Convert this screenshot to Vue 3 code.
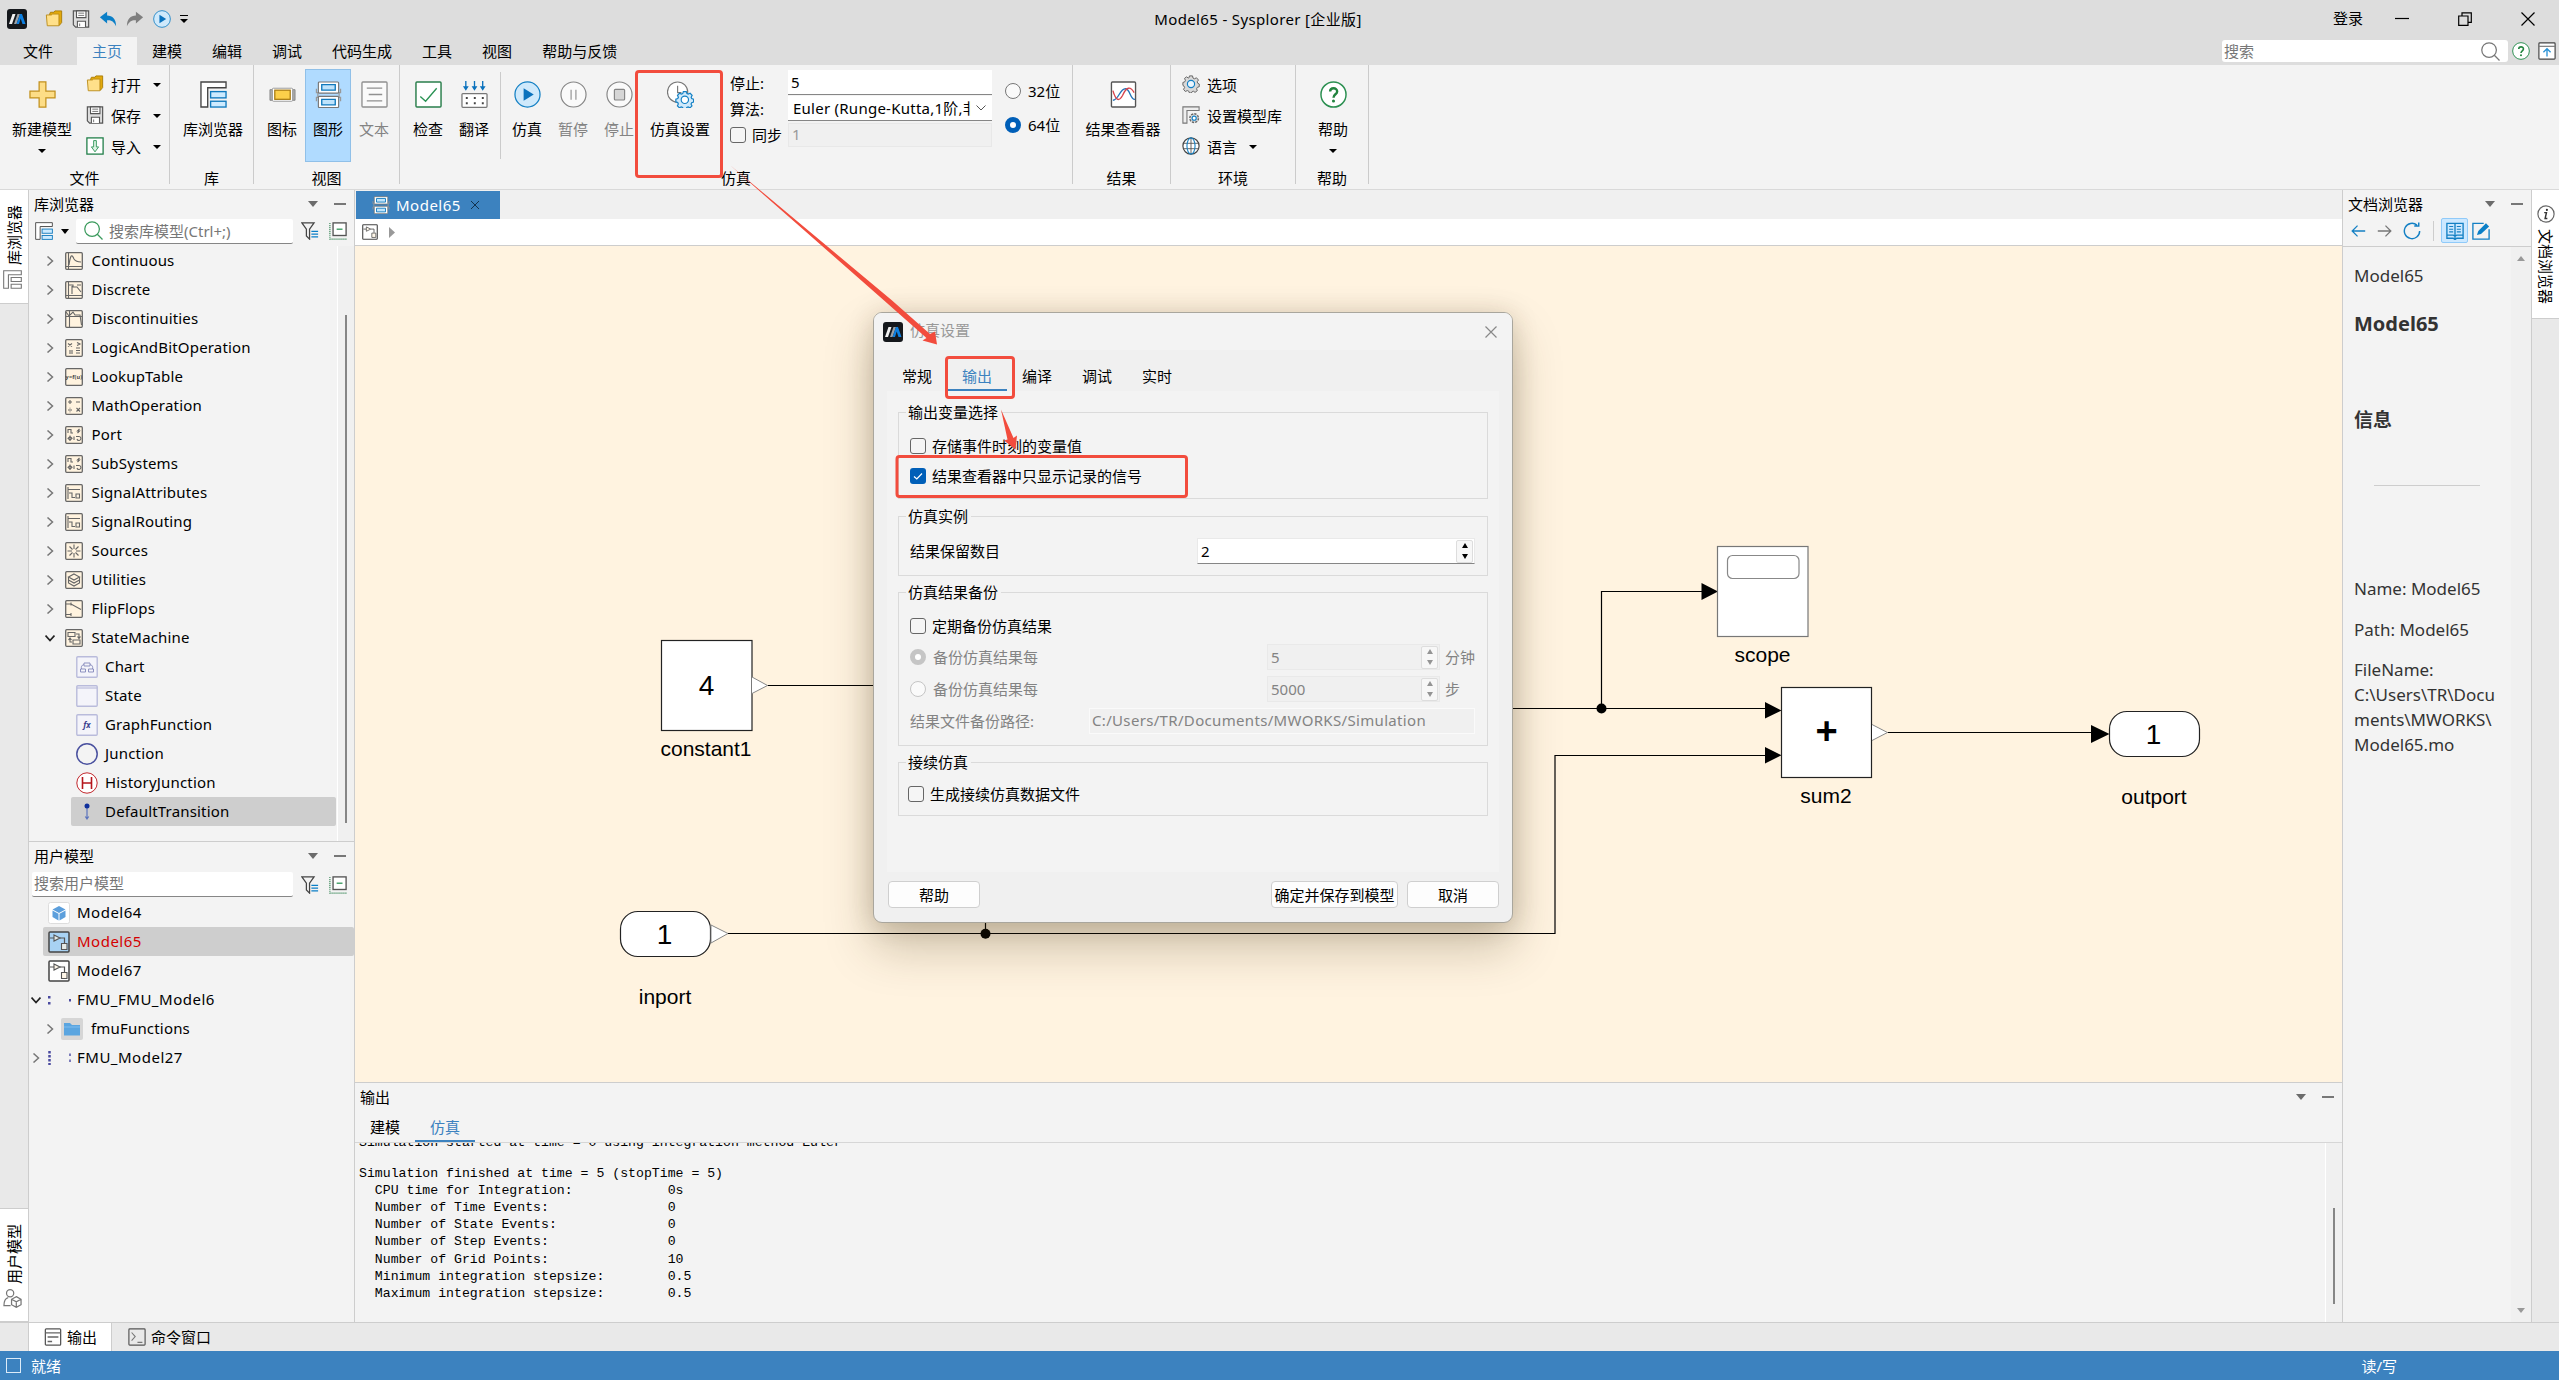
<template>
  <div class="window">
    <!-- Icon sprites -->
    <svg class="sprites" width="0" height="0">
      <symbol id="logo" viewBox="0 0 20 20">
        <rect width="20" height="20" rx="3" fill="#15181c"/>
        <path d="M2 15 L5.5 5 H8.5 L5 15 Z" fill="#f2f2f2"/>
        <path d="M7 15 L10.5 5 H13 L9.5 15 Z" fill="#9aa0a6"/>
        <path d="M9.5 15 L13 5 H15 L18.5 15 H15.5 L13.7 9.5 L12 15 Z" fill="#0d7fe0"/>
      </symbol>
      <symbol id="folder" viewBox="0 0 20 20">
        <path d="M5 5 L6 2.5 H10 L11 1 H18.5 V14 L16 17 Z" fill="#e2a90c" stroke="#a87a05"/>
        <path d="M1.5 5.5 H7 L8.5 4.5 H15.5 V17.5 H2.5 Z" fill="#ffe08a" stroke="#b98a16"/>
      </symbol>
      <symbol id="save" viewBox="0 0 20 20">
        <path d="M1.5 1 H18.5 V19 H4 L1.5 16.5 Z" fill="#ddd" stroke="#555" stroke-width="1.3"/>
        <path d="M5 1 H15.5 V8.5 H5 Z M6 19 V12.5 H15 V19" fill="#fff" stroke="#555" stroke-width="1.2"/>
        <path d="M7 3.5 H13.5 M7 6 H13.5 M8.5 15 V18" stroke="#666"/>
      </symbol>
      <symbol id="undo" viewBox="0 0 20 20">
        <path d="M1 8 L9 2 V6 C15 6 19 10 19 18 C16.5 12.5 13.5 11 9 11.3 V15 Z" fill="#0b7fc7"/>
      </symbol>
      <symbol id="redo" viewBox="0 0 20 20">
        <path d="M19 8 L11 2 V6 C5 6 1 10 1 18 C3.5 12.5 6.5 11 11 11.3 V15 Z" fill="#7f7f7f"/>
      </symbol>
      <symbol id="play" viewBox="0 0 28 28">
        <circle cx="14" cy="14" r="13" fill="#cfe9fb" stroke="#1480c4" stroke-width="1.3"/>
        <path d="M10 7.5 L20.5 14 L10 20.5 Z" fill="#0a72bd"/>
      </symbol>
      <symbol id="pause" viewBox="0 0 28 28">
        <circle cx="14" cy="14" r="13" fill="#fafafa" stroke="#858585" stroke-width="1.2"/>
        <path d="M11.5 9 V19.5 M16.5 9 V19.5" stroke="#999" stroke-width="1.3"/>
      </symbol>
      <symbol id="stop" viewBox="0 0 28 28">
        <circle cx="14" cy="14" r="13" fill="#fafafa" stroke="#858585" stroke-width="1.2"/>
        <rect x="8.7" y="8.7" width="10.6" height="11" rx="1" fill="#d6d6d6" stroke="#858585" stroke-width="1.2"/>
      </symbol>
      <symbol id="plus" viewBox="0 0 28 28">
        <path d="M10.5 1 H17.5 V10.5 H27 V17.5 H17.5 V27 H10.5 V17.5 H1 V10.5 H10.5 Z" fill="#fddd86" stroke="#c2901c" stroke-width="1.3"/>
      </symbol>
      <symbol id="import" viewBox="0 0 20 20">
        <rect x="1" y="1" width="18" height="18" fill="#fff" stroke="#1c7c45" stroke-width="1.4"/>
        <path d="M8.5 4 H11.5 V11 H14 L10 16.5 L6 11 H8.5 Z" fill="#dff5e6" stroke="#2a9354"/>
      </symbol>
      <symbol id="lib" viewBox="0 0 28 28">
        <path d="M1 1 H27 V7 H8 V27 H1 Z" fill="#fff" stroke="#444" stroke-width="1.4"/>
        <rect x="11" y="11" width="16" height="6.5" fill="#cdebff" stroke="#1079bd" stroke-width="1.4"/>
        <rect x="11" y="21" width="16" height="6" fill="#cdebff" stroke="#1079bd" stroke-width="1.4"/>
      </symbol>
      <symbol id="lib-gray" viewBox="0 0 28 28">
        <path d="M1 1 H27 V7 H8 V27 H1 Z M12 11 H27 V17 H12 Z M12 21 H27 V27 H12 Z" fill="#fff" stroke="#777" stroke-width="1.6"/>
      </symbol>
      <symbol id="badge" viewBox="0 0 28 28">
        <path d="M1 9 H4 V20 H1 Z M24 9 H27 V20 H24 Z" fill="#aaa" stroke="#888"/>
        <rect x="3.5" y="7.5" width="21" height="13.5" rx="1" fill="#fff" stroke="#999"/>
        <rect x="6" y="9.5" width="16" height="9.5" fill="#fccf4a" stroke="#a87a10" stroke-width="1.3"/>
      </symbol>
      <symbol id="graph" viewBox="0 0 28 28">
        <path d="M3 12 V17 M25 12 V17 M1.5 8 V12 H4 M26.5 8 V12 H24 M1.5 21 V17 H4 M26.5 21 V17 H24" fill="none" stroke="#999" stroke-width="1.3"/>
        <rect x="3.5" y="1" width="21" height="11.5" rx="1" fill="#fff" stroke="#777" stroke-width="1.2"/>
        <rect x="3.5" y="16" width="21" height="11.5" rx="1" fill="#fff" stroke="#777" stroke-width="1.2"/>
        <path d="M7 3.8 H21 V9.5 H7 Z M7 19 H21 V24.7 H7 Z" fill="#bfe3fb" stroke="#1079bd" stroke-width="1.4"/>
      </symbol>
      <symbol id="text" viewBox="0 0 28 28">
        <rect x="1" y="1" width="26" height="26" rx="1" fill="#fafafa" stroke="#909090" stroke-width="1.4"/>
        <path d="M6 7.5 H22 M8 14 H22 M6 20.5 H22" stroke="#909090" stroke-width="1.3"/>
      </symbol>
      <symbol id="check" viewBox="0 0 28 28">
        <rect x="1" y="1" width="26" height="26" rx="1" fill="#fff" stroke="#2a7f4c" stroke-width="1.5"/>
        <path d="M5.5 16 L11 21 L22.5 7.5" fill="none" stroke="#2a9354" stroke-width="1.4"/>
      </symbol>
      <symbol id="translate" viewBox="0 0 28 28">
        <path d="M5 0 V8 M14 0 V8 M22.5 0 V8" stroke="#0b72bd" stroke-width="1.4"/>
        <path d="M2 5.5 H8 L5 10 Z M11 5.5 H17 L14 10 Z M19.5 5.5 H25.5 L22.5 10 Z" fill="#0b72bd"/>
        <rect x="1" y="13" width="26" height="14.3" rx="1" fill="#fff" stroke="#777" stroke-width="1.3"/>
        <path d="M5 17.7 H24 M5 23 H24" stroke="#444" stroke-width="2" stroke-dasharray="2 6.3"/>
      </symbol>
      <symbol id="gear" viewBox="0 0 20 20">
        <path d="M8.3 1 h3.4 l.5 2.4 1.7.8 2.2-1.1 2.2 2.5-1.4 1.9.5 1.6 1.8.9v3l-2.2.7-.8 1.6.8 2.1-2.5 1.9-1.9-1.3-1.3.4-.9 1.6H8.3l-.8-2-1.6-.7-2.2 1-2-2.4 1.2-2-.7-1.6L1 11.5 V8.3l2.1-.7.7-1.7-1-2.1L5 2.1l2 1.2.9-.4Z" fill="#d9d9d9" stroke="#666" stroke-width="1.1"/>
        <circle cx="10" cy="10" r="4" fill="#eaf6ff" stroke="#1480c4" stroke-width="1.3"/>
      </symbol>
      <symbol id="sim-set" viewBox="0 0 28 28">
        <circle cx="11" cy="11.5" r="10.5" fill="#fff" stroke="#777" stroke-width="1.2"/>
        <path d="M11 5 V12 H15" fill="none" stroke="#777" stroke-width="1.2"/>
        <path d="M16.8 10.5 h3.2 l.7 2.2 1.4.6 2.1-1 2.2 2.3-1.1 2 .6 1.5 2.1.8v3l-2.1.7-.7 1.5 1 2-2.2 2.2-2-1-1.5.6-.7 2.100h-3.100l-.7-2.100-1.500-.7-2 1-2.200-2.200 1-2-.6-1.500-2.100-.7v-3l2.100-.7.7-1.500-1-2 2.200-2.300 2 1 1.500-.6Z" transform="translate(1 1) scale(.95)" fill="#cfe9fb" stroke="#1480c4" stroke-width="1.3"/>
        <circle cx="18.500" cy="19.500" r="3.800" fill="#fff" stroke="#1480c4" stroke-width="1.200"/>
      </symbol>
      <symbol id="result" viewBox="0 0 28 28">
        <rect x="1.500" y="1" width="25" height="26" rx="1" fill="#fff" stroke="#555" stroke-width="1.400"/>
        <path d="M3 20 C9 20 10 8 16 8 C21 8 21 20 26 19" fill="none" stroke="#2374b8" stroke-width="1.400"/>
        <path d="M3 10 C6 20 9 22 13 15 C17 6 21 5 25 12" fill="none" stroke="#d8434b" stroke-width="1.400"/>
      </symbol>
      <symbol id="lib-set" viewBox="0 0 20 20">
        <path d="M1 1 H19 V5 H5.500 V19 H1 Z" fill="#eee" stroke="#777" stroke-width="1.200"/>
        <circle cx="13.500" cy="13.500" r="4.800" fill="#ddd" stroke="#666" stroke-width="1.600" stroke-dasharray="2.500 1.200"/>
        <circle cx="13.500" cy="13.500" r="2.300" fill="#fff" stroke="#1480c4" stroke-width="1.300"/>
      </symbol>
      <symbol id="globe" viewBox="0 0 20 20">
        <circle cx="10" cy="10" r="9" fill="#fff" stroke="#444" stroke-width="1.300"/>
        <path d="M10 1 V19 M1.500 7 H18.500 M1.500 13 H18.500" stroke="#555"/>
        <ellipse cx="10" cy="10" rx="4.500" ry="9" fill="none" stroke="#1480c4" stroke-width="1.200"/>
      </symbol>
      <symbol id="help" viewBox="0 0 28 28">
        <circle cx="14" cy="14" r="13" fill="#fff" stroke="#2a8f50" stroke-width="1.500"/>
        <path d="M10.500 11 C10.500 6.500 17.800 6.500 17.800 10.800 C17.800 13.800 14 13.800 14 17.300" fill="none" stroke="#23843f" stroke-width="2.500"/>
        <circle cx="14" cy="20.700" r="1.600" fill="#23843f"/>
      </symbol>
      <symbol id="fold-up" viewBox="0 0 20 20">
        <rect x="1" y="1" width="18" height="18" rx="1" fill="#fff" stroke="#444" stroke-width="1.300"/>
        <path d="M1 4.800 H19" stroke="#777" stroke-width="1.300"/>
        <path d="M10 16 V8 M6 11.500 L10 7.500 L14 11.500" fill="none" stroke="#2b93d6" stroke-width="1.500"/>
      </symbol>
      <symbol id="search" viewBox="0 0 20 20">
        <circle cx="8.500" cy="8.500" r="7.700" fill="none" stroke="currentColor" stroke-width="1.300"/>
        <path d="M14 14 L19.500 19.500" stroke="currentColor" stroke-width="1.300"/>
      </symbol>
      <symbol id="filter" viewBox="0 0 20 20">
        <path d="M1 1 H14.500 L9.500 8 V19 L6 15.500 V8 Z" fill="none" stroke="#444" stroke-width="1.400"/>
        <path d="M11.500 10.500 H19 M11.500 13.500 H19 M11.500 16.500 H19" stroke="#0b7fc7" stroke-width="1.300"/>
      </symbol>
      <symbol id="collapse" viewBox="0 0 20 20">
        <rect x="4.500" y="1" width="14.500" height="14" fill="#fff" stroke="#555" stroke-width="1.500"/>
        <path d="M8.500 8 H15" stroke="#2a9354" stroke-width="1.400"/>
        <path d="M1 1 V19 H20" fill="none" stroke="#2a7f4c" stroke-width="1.200" stroke-dasharray="1.200 1"/>
      </symbol>
      <symbol id="user" viewBox="0 0 20 20">
        <circle cx="7.500" cy="4.500" r="3.800" fill="none" stroke="#777" stroke-width="1.300"/>
        <path d="M8 17.500 H1 C1 11 3 9.500 5.500 9 M14 8 L19 10.800 V16.500 L14 19.300 L9 16.500 V10.800 Z M9 10.800 L14 13.500 L19 10.800 M14 13.500 V19" fill="none" stroke="#777" stroke-width="1.300"/>
      </symbol>
      <symbol id="diagram" viewBox="0 0 22 22">
        <rect x="1" y="1" width="20" height="20" rx="1" fill="currentColor" stroke="#444" stroke-width="1.500"/>
        <path d="M2 7 H6 M12 7 H16.500 V12" fill="none" stroke="#555" stroke-width="1.200"/>
        <path d="M6 4 L12 7 L6 10 Z M13.500 12.500 H19 V18.500 H13.500 Z" fill="#fff3df" fill-opacity=".7" stroke="#555" stroke-width="1.100"/>
      </symbol>
      <symbol id="output" viewBox="0 0 20 20">
        <rect x="1.500" y="1" width="17" height="18" rx="1" fill="#fff" stroke="#555" stroke-width="1.400"/>
        <path d="M1.500 5.500 H18.500 M4 10 H16 M4 15 H9" stroke="#666" stroke-width="1.400"/>
      </symbol>
      <symbol id="cmd" viewBox="0 0 20 20">
        <rect x="1" y="1" width="18" height="18" rx="1" fill="none" stroke="#555" stroke-width="1.300"/>
        <path d="M4 5 L8 9.500 L4 14 M10.500 16 H16" fill="none" stroke="#777" stroke-width="1.200"/>
      </symbol>
      <symbol id="back" viewBox="0 0 20 20">
        <path d="M18 10 H3.500 M9.500 4 L3.500 10 L9.500 16" fill="none" stroke="currentColor" stroke-width="1.400"/>
      </symbol>
      <symbol id="refresh" viewBox="0 0 20 20">
        <path d="M18.500 10 A8.500 8.500 0 1 1 15.500 3.500 M17.500 .5 V4.500 H12.500" fill="none" stroke="#1480c4" stroke-width="1.600"/>
      </symbol>
      <symbol id="book" viewBox="0 0 20 20">
        <path d="M1 1.500 H19 V18 H12 L10 19.500 L8 18 H1 Z M10 2 V19 M1 14.500 H8 L10 16 L12 14.500 H19" fill="none" stroke="#1480c4" stroke-width="1.500"/>
        <path d="M3.500 5 H8 M3.500 8 H8 M3.500 11 H8 M12 5 H16.500 M12 8 H16.500 M12 11 H16.500" stroke="#1480c4" stroke-width="1.200"/>
      </symbol>
      <symbol id="edit" viewBox="0 0 20 20">
        <path d="M13 1.500 H1 V19 H19 V8" fill="none" stroke="#1480c4" stroke-width="1.500"/>
        <path d="M5.500 14.500 L7 10 L15.500 1.500 L19 5 L10 13.200 Z" fill="#0b7fc7"/>
      </symbol>
      <symbol id="info" viewBox="0 0 20 20">
        <circle cx="10" cy="10" r="9" fill="#fff" stroke="#666" stroke-width="1.300"/>
        <path d="M8 8.500 H10.500 L9 15 H11.500" fill="none" stroke="#333" stroke-width="1.600"/>
        <circle cx="11" cy="5.500" r="1.200" fill="#333"/>
      </symbol>
    </svg>

    <!-- Title bar -->
    <header class="titlebar">
      <div class="quick">
        <svg class="ic20"><use href="#logo"/></svg>
        <svg v-for="q in quick" :key="q" class="ic18"><use :href="'#' + q"/></svg>
        <span class="quick-more"><i></i><b class="tri"></b></span>
      </div>
      <div class="title">Model65 - Sysplorer [企业版]</div>
      <div class="win-btns">
        <span class="login">登录</span>
        <svg class="wb" viewBox="0 0 14 14"><path d="M0 6.500 H14"/></svg>
        <svg class="wb" viewBox="0 0 14 14"><path d="M.7 4 H10 V13.300 H.7 Z M4 4 V.8 H13.300 V10.300 H10"/></svg>
        <svg class="wb" viewBox="0 0 14 14"><path d="M.5 .5 L13.500 13.500 M13.500 .5 L.5 13.500"/></svg>
      </div>
    </header>

    <nav class="menubar">
      <span v-for="m in menus" :key="m" :class="['menu', { active: m === activeMenu, first: m === '文件' }]" @click="activeMenu = m">{{ m }}</span>
      <div class="top-search"><span>搜索</span><svg class="ic19"><use href="#search"/></svg></div>
      <svg class="ic18 mr8"><use href="#help"/></svg>
      <svg class="ic18 mr3"><use href="#fold-up"/></svg>
    </nav>

    <!-- Ribbon -->
    <section class="ribbon">
      <div class="group g-file">
        <div class="tools">
          <div class="big w60">
            <svg class="ic27"><use href="#plus"/></svg>
            <span>新建模型</span>
            <b class="tri"></b>
          </div>
          <div class="small-col">
            <div v-for="s in fileTools" :key="s.label" class="small">
              <svg class="ic18"><use :href="'#' + s.icon"/></svg>
              <span>{{ s.label }}</span>
              <b class="tri"></b>
            </div>
          </div>
        </div>
        <div class="group-name">文件</div>
      </div>
      <div class="group g-lib">
        <div class="tools">
          <div class="big w60"><svg class="ic27"><use href="#lib"/></svg><span>库浏览器</span></div>
        </div>
        <div class="group-name">库</div>
      </div>
      <div class="group g-view">
        <div class="tools">
          <div class="big"><svg class="ic27"><use href="#badge"/></svg><span>图标</span></div>
          <div class="big on"><svg class="ic27"><use href="#graph"/></svg><span>图形</span></div>
          <div class="big off"><svg class="ic27"><use href="#text"/></svg><span>文本</span></div>
        </div>
        <div class="group-name">视图</div>
      </div>
      <div class="group g-sim">
        <div class="tools">
          <div class="big"><svg class="ic27"><use href="#check"/></svg><span>检查</span></div>
          <div class="big"><svg class="ic27"><use href="#translate"/></svg><span>翻译</span></div>
          <i class="vsep"></i>
          <div class="big"><svg class="ic27"><use href="#play"/></svg><span>仿真</span></div>
          <div class="big off"><svg class="ic27"><use href="#pause"/></svg><span>暂停</span></div>
          <div class="big off"><svg class="ic27"><use href="#stop"/></svg><span>停止</span></div>
          <div class="big w76"><svg class="ic27"><use href="#sim-set"/></svg><span>仿真设置</span></div>
          <div class="sim-form">
            <label>停止:</label><div class="field">5</div>
            <label>算法:</label>
            <div class="field combo"><span>Euler (Runge-Kutta,1阶,非刚性)</span><svg viewBox="0 0 10 6"><path d="M.5 .5 L5 5 L9.500 .5"/></svg></div>
            <label class="sync"><i class="box"></i>同步</label><div class="field disabled">1</div>
          </div>
          <div class="bits">
            <label><i class="radio"></i>32位</label>
            <label><i class="radio on"></i>64位</label>
          </div>
        </div>
        <div class="group-name">仿真</div>
      </div>
      <div class="group g-result">
        <div class="tools">
          <div class="big w76"><svg class="ic27"><use href="#result"/></svg><span>结果查看器</span></div>
        </div>
        <div class="group-name">结果</div>
      </div>
      <div class="group g-env">
        <div class="tools">
          <div class="small-col">
            <div class="small"><svg class="ic18"><use href="#gear"/></svg><span>选项</span></div>
            <div class="small"><svg class="ic18"><use href="#lib-set"/></svg><span>设置模型库</span></div>
            <div class="small"><svg class="ic18"><use href="#globe"/></svg><span>语言</span><b class="tri"></b></div>
          </div>
        </div>
        <div class="group-name">环境</div>
      </div>
      <div class="group g-help">
        <div class="tools">
          <div class="big"><svg class="ic27"><use href="#help"/></svg><span>帮助</span><b class="tri"></b></div>
        </div>
        <div class="group-name">帮助</div>
      </div>
    </section>

    <!-- Work area -->
    <main class="work">
      <aside class="strip left">
        <div class="vtab up"><span>库浏览器</span><svg class="ic19"><use href="#lib-gray"/></svg></div>
        <div class="vtab down"><span>用户模型</span><svg class="ic19"><use href="#user"/></svg></div>
      </aside>

      <section class="side">
        <div class="panel lib-panel">
          <div class="panel-head"><span>库浏览器</span><b class="tri big-tri"></b><i class="dash"></i></div>
          <div class="panel-tools">
            <svg class="ic18"><use href="#lib"/></svg>
            <b class="tri black"></b>
            <div class="search-box"><svg class="ic19 green"><use href="#search"/></svg>搜索库模型(Ctrl+;)</div>
            <svg class="ic18 flt"><use href="#filter"/></svg>
            <svg class="ic18"><use href="#collapse"/></svg>
          </div>
          <div class="tree-wrap">
            <div class="tree">
              <div v-for="n in library" :key="n.name" class="row">
                <svg :class="['chev', { open: n.open }]" viewBox="0 0 10 10"><path d="M2.500 .5 L7.500 5 L2.500 9.500"/></svg>
                <svg class="ic18 node-icon" viewBox="0 0 18 18">
                  <rect x=".7" y=".7" width="16.600" height="16.600" rx="1" fill="#fff3df" stroke="#666" stroke-width="1.300"/>
                  <text v-if="n.glyph" x="9" y="11" text-anchor="middle" font-size="5.500" font-weight="bold" font-family="Noto Sans" fill="#444">{{ n.glyph }}</text>
                  <path :d="n.path" fill="none" stroke="#666" stroke-width="1.100"/>
                </svg>
                <span>{{ n.name }}</span>
              </div>
              <div v-for="c in states" :key="c.name" :class="['row', 'child', { selected: c.name === 'DefaultTransition' }]">
                <svg class="ic22" viewBox="0 0 22 22">
                  <rect v-if="c.box" x=".8" y=".8" width="20.400" height="20.400" rx="1" fill="#f4f4fa" stroke="#b9bbdb" stroke-width="1.400"/>
                  <circle v-if="c.ring" cx="11" cy="11" r="10.200" :fill="c.fill" :stroke="c.ring" :stroke-width="c.sw"/>
                  <text v-if="c.glyph" x="11" y="13.500" text-anchor="middle" font-size="8" font-style="italic" font-weight="bold" font-family="Noto Sans" fill="#3b3f8f">{{ c.glyph }}</text>
                  <path v-if="c.path" :d="c.path" fill="none" :stroke="c.stroke" :stroke-width="c.pw"/>
                  <circle v-if="c.dot" cx="11" cy="5" r="2.500" fill="#10309c"/>
                </svg>
                <span>{{ c.name }}</span>
              </div>
            </div>
            <div class="track"><i class="thumb"></i></div>
          </div>
        </div>
        <div class="panel user-panel">
          <div class="panel-head"><span>用户模型</span><b class="tri big-tri"></b><i class="dash"></i></div>
          <div class="panel-tools user-tools">
            <div class="search-box wide">搜索用户模型</div>
            <svg class="ic18 flt"><use href="#filter"/></svg>
            <svg class="ic18"><use href="#collapse"/></svg>
          </div>
          <div class="tree user-tree">
            <div class="row model">
              <svg class="ic22" viewBox="0 0 22 22"><rect x=".5" y=".5" width="21" height="21" rx="2" fill="#fff" stroke="#ddd"/><path d="M11 4 L17.500 7.500 L11 11 L4.500 7.500 Z M4.500 8.500 L10.500 11.800 V18.500 L4.500 15 Z M17.500 8.500 L11.500 11.800 V18.500 L17.500 15 Z" fill="#5c9fdc"/></svg>
              <span>Model64</span>
            </div>
            <div class="row model selected"><svg class="ic22 blue"><use href="#diagram"/></svg><span>Model65</span></div>
            <div class="row model"><svg class="ic22 white"><use href="#diagram"/></svg><span>Model67</span></div>
            <div class="row fmu">
              <svg class="chev open" viewBox="0 0 10 10"><path d="M2.500 .5 L7.500 5 L2.500 9.500"/></svg>
              <svg class="ic24" viewBox="0 0 24 22"><path d="M1 7 h2.500 v2.500 h-2.500 Z M1 13 h2.500 v2.500 h-2.500 Z M22 10 h2 v2.500 h-2 Z" fill="#4a4aa0"/></svg>
              <span>FMU_FMU_Model6</span>
            </div>
            <div class="row fmu-child">
              <svg class="chev" viewBox="0 0 10 10"><path d="M2.500 .5 L7.500 5 L2.500 9.500"/></svg>
              <svg class="ic22" viewBox="0 0 22 22"><rect width="22" height="22" rx="2" fill="#d6d6d6"/><path d="M3 5 H9 L11 7 H19 V17.500 H3 Z" fill="#5aa5e0"/><path d="M3 9 H19" stroke="#7cbcf0"/></svg>
              <span>fmuFunctions</span>
            </div>
            <div class="row fmu">
              <svg class="chev" viewBox="0 0 10 10"><path d="M2.500 .5 L7.500 5 L2.500 9.500"/></svg>
              <svg class="ic24" viewBox="0 0 24 22"><path d="M2.500 4 V18" stroke="#4a4aa0" stroke-width="2.500" stroke-dasharray="2.500 1.500"/><path d="M22 6.500 h2 v2.500 h-2 Z M22 12.500 h2 v2.500 h-2 Z" fill="#7a7aba"/></svg>
              <span>FMU_Model27</span>
            </div>
          </div>
        </div>
      </section>

      <section class="center">
        <div class="tabs">
          <div class="doc-tab"><svg class="ic18"><use href="#graph"/></svg><span>Model65</span><svg class="x" viewBox="0 0 10 10"><path d="M1 1 L9 9 M9 1 L1 9"/></svg></div>
        </div>
        <div class="crumbs"><svg class="ic16"><use href="#diagram"/></svg><svg class="crumb-tri" viewBox="0 0 6 11"><path d="M0 0 L6 5.500 L0 11 Z" fill="#999"/></svg></div>
        <!-- Block diagram -->
        <svg class="canvas" viewBox="356 246 1985 836">
          <g fill="none" stroke="#000" stroke-width="1.200">
            <path d="M767.500 685.500 H900"/>
            <path d="M728 933.500 H1555 V755.500 H1766"/>
            <path d="M985.500 933.500 V915"/>
            <path d="M1500 708.500 H1766 M1601.500 708.500 V591.500 H1702"/>
            <path d="M1887.500 732.500 H2092"/>
          </g>
          <circle cx="985.500" cy="933.800" r="5"/>
          <circle cx="1601.500" cy="708.500" r="5"/>
          <path d="M1701.500 583 L1718 591.500 L1701.500 600 Z M1765 702 L1781.500 710.500 L1765 718.500 Z M1765 747 L1781.500 755.300 L1765 763.500 Z M2091 725 L2109.500 734 L2091 743 Z"/>
          <g fill="#fff" stroke="#222" stroke-width="1.200">
            <rect x="661.500" y="640.500" width="90.500" height="90"/>
            <rect x="620.500" y="911.500" width="90" height="45" rx="17.500"/>
            <rect x="1781.500" y="687.500" width="90" height="90"/>
            <rect x="2109.500" y="711.500" width="90" height="45" rx="17.500"/>
            <rect x="1717.500" y="546.500" width="90.500" height="90" stroke="#777"/>
            <rect x="1727.500" y="555.500" width="71.500" height="23" rx="5" stroke="#888"/>
          </g>
          <path d="M752 677 L767.500 685.500 L752 693.500 M711 925 L728 933.500 L711 943 Z M1872 724.500 L1887.500 732.500 L1872 740.500" fill="#fff" stroke="#888"/>
          <text v-for="t in labels" :key="t.x + t.text" :x="t.x" :y="t.y" :font-size="t.size" :font-weight="t.weight">{{ t.text }}</text>
        </svg>
        <!-- Output -->
        <div class="output">
          <div class="panel-head out-head"><span>输出</span><b class="tri big-tri"></b><i class="dash"></i></div>
          <div class="out-tabs"><span>建模</span><span class="active">仿真</span></div>
          <div class="log-wrap">
            <div class="log">
              <pre class="scrolled">Simulation started at time = 0 using integration method Euler</pre>
              <pre>{{ log }}</pre>
            </div>
            <div class="track log-track"><i class="thumb log-thumb"></i></div>
          </div>
        </div>
      </section>

      <section class="docs">
        <div class="panel-head"><span>文档浏览器</span><b class="tri big-tri"></b><i class="dash"></i></div>
        <div class="doc-tools">
          <svg class="ic18 link"><use href="#back"/></svg>
          <svg class="ic18 fwd"><use href="#back"/></svg>
          <svg class="ic18"><use href="#refresh"/></svg>
          <i class="dsep"></i>
          <span class="hl"><svg class="ic18"><use href="#book"/></svg></span>
          <svg class="ic18"><use href="#edit"/></svg>
        </div>
        <div class="doc-body">
          <div class="doc-text">
            <p class="d1">Model65</p>
            <h2>Model65</h2>
            <h3>信息</h3>
            <hr>
            <p class="d2">Name: Model65</p>
            <p class="d3">Path: Model65</p>
            <p class="d4">FileName:<br>C:\Users\TR\Docu<br>ments\MWORKS\<br>Model65.mo</p>
          </div>
          <div class="doc-track"><b class="tri up-tri"></b><b class="tri down-tri"></b></div>
        </div>
      </section>

      <aside class="strip right">
        <div class="vtab"><svg class="ic18"><use href="#info"/></svg><span>文档浏览器</span></div>
      </aside>
    </main>

    <div class="bottom-tabs">
      <div class="btab active"><svg class="ic18"><use href="#output"/></svg>输出</div>
      <div class="btab"><svg class="ic18"><use href="#cmd"/></svg>命令窗口</div>
    </div>
    <footer class="status"><i></i><span>就绪</span><span class="rw">读/写</span></footer>

    <!-- Simulation settings dialog -->
    <div class="dialog">
      <div class="dlg-title">
        <svg class="ic20"><use href="#logo"/></svg>
        <span>仿真设置</span>
        <svg class="dlg-x" viewBox="0 0 12 12"><path d="M.5 .5 L11.500 11.500 M11.500 .5 L.5 11.500"/></svg>
      </div>
      <div class="dlg-tabs">
        <span v-for="t in dlgTabs" :key="t" :class="{ active: t === '输出' }">{{ t }}</span>
      </div>
      <div class="dlg-page">
        <fieldset class="fs1">
          <legend>输出变量选择</legend>
          <label><i class="box"></i>存储事件时刻的变量值</label>
          <label><i class="box checked"><svg viewBox="0 0 16 16"><path d="M4 8.500 L6.800 11 L12 5.500"/></svg></i>结果查看器中只显示记录的信号</label>
        </fieldset>
        <fieldset class="fs2">
          <legend>仿真实例</legend>
          <div class="line"><span>结果保留数目</span><div class="spin live">2<em><b class="tri"></b><b class="tri"></b></em></div></div>
        </fieldset>
        <fieldset class="fs3">
          <legend>仿真结果备份</legend>
          <label><i class="box"></i>定期备份仿真结果</label>
          <div class="line gray"><label><i class="radio on dim"></i>备份仿真结果每</label><div class="spin">5<em><b class="tri"></b><b class="tri"></b></em></div><span class="unit">分钟</span></div>
          <div class="line gray"><label><i class="radio dim"></i>备份仿真结果每</label><div class="spin">5000<em><b class="tri"></b><b class="tri"></b></em></div><span class="unit">步</span></div>
          <div class="line gray"><span>结果文件备份路径:</span><div class="path">C:/Users/TR/Documents/MWORKS/Simulation</div></div>
        </fieldset>
        <fieldset class="fs4">
          <legend>接续仿真</legend>
          <label><i class="box"></i>生成接续仿真数据文件</label>
        </fieldset>
      </div>
      <div class="dlg-btns">
        <button>帮助</button>
        <button class="save-btn">确定并保存到模型</button>
        <button>取消</button>
      </div>
    </div>

    <!-- Red callouts -->
    <svg class="marks" viewBox="0 0 2559 1380">
      <g fill="none" stroke="#f24c3d" stroke-width="3">
        <rect x="636.500" y="71.500" width="85" height="105" rx="2.500"/>
        <rect x="946.500" y="357.500" width="67" height="40" rx="2.500"/>
        <rect x="897" y="456.500" width="289.500" height="40" rx="2.500"/>
      </g>
      <path d="M730.500 165.500 L891.500 300 L930 334 L935 331.500 L937 344.500 L922.500 340.500 L926.500 338 L883.500 300 Z" fill="#f24c3d"/>
      <path d="M1001 409.500 L1013.500 438 L1017 435.500 L1015.500 449.500 L1004 440.500 L1007.500 439.500 Z" fill="#f24c3d"/>
    </svg>
  </div>
</template>

<script setup>
import { ref } from 'vue';

const activeMenu = ref('主页');
const menus = ['文件', '主页', '建模', '编辑', '调试', '代码生成', '工具', '视图', '帮助与反馈'];
const quick = ['folder', 'save', 'undo', 'redo', 'play'];
const fileTools = [
  { icon: 'folder', label: '打开' },
  { icon: 'save', label: '保存' },
  { icon: 'import', label: '导入' },
];
const dlgTabs = ['常规', '输出', '编译', '调试', '实时'];

const portPath = 'M3 7 V3.500 H6 V7 H8 M14.500 3 L12.500 5 H14.500 L12.500 7 M5 9.500 V15 M3 12.300 L5 10.500 L7 12.300 L5 14.200 Z M9 10.500 V14 M11 10.500 H14 A2 2 0 1 1 12 13';
const signalPath = 'M3 3 V15 M3 5.500 H15 M4 9 H7 V13.500 H10 M11 10 H14.500 V14 H11 Z';
const library = [
  { name: 'Continuous', path: 'M3.500 1 V17 M1 14.500 H17 M4 13 C5.500 2 7 2 9 7 C11 10 13 10 16 10' },
  { name: 'Discrete', path: 'M3.500 1 V17 M1 14.500 H17 M4 4 H8 V6 L12 6 L16 11 M7 13 V5 M12 4 H16' },
  { name: 'Discontinuities', path: 'M4.500 1 V17 M1 6.500 H17 M1 2 L4 6 L8 2 L10 5 H15 L16.500 15' },
  { name: 'LogicAndBitOperation', path: 'M3 4.500 L7 7.500 M7 4.500 L3 7.500 M5 11 V15 M7 11 V15 M12 3.500 L15 5 L12 6.500 M11 9 H15 M11 11.500 H15 M11 14 H15' },
  { name: 'LookupTable', glyph: 'y=f(u)' },
  { name: 'MathOperation', path: 'M3 5 H7 M5 3 V7 M11 5 H15 M3 13 H7 M5 10.800 V11.500 M5 14.500 V15.200 M11.500 11 L15 14.500 M15 11 L11.500 14.500' },
  { name: 'Port', path: portPath },
  { name: 'SubSystems', path: portPath },
  { name: 'SignalAttributes', path: signalPath },
  { name: 'SignalRouting', path: signalPath },
  { name: 'Sources', path: 'M9 2.500 V7 M9 11 V15.500 M2.500 9 H7 M11 9 H15.500 M4.500 4.500 L7.500 7.500 M13.500 4.500 L10.500 7.500 M4.500 13.500 L7.500 10.500 M13.500 13.500 L10.500 10.500' },
  { name: 'Utilities', path: 'M9 3 L14.500 6 L9 9 L3.500 6 Z M3.500 6 V12 L9 15 L14.500 12 V6 M3.500 9 L9 12 L14.500 9' },
  { name: 'FlipFlops', path: 'M1 4 H6 L16 9.500 M6 2.500 V5.500 M1 14.500 H6 M6 13 V16' },
  { name: 'StateMachine', open: true, path: 'M3 3.500 H10 V7.500 H3 Z M8 11 H15 V15 H8 Z M11 5 H14 V9 M12.500 7.500 L14 9.500 L15.500 7.500 M5 9.500 V13 H7 M3.500 11 L5 9 L6.500 11' },
];
const states = [
  { name: 'Chart', box: true, stroke: '#8d91c0', pw: 1, path: 'M8 7 H14 V10 H8 Z M4.500 13 H9.500 V16 H4.500 Z M12.500 13 H17.500 V16 H12.500 Z M8 8.500 C5.500 9 5 11 5.500 13 M14 8.500 C16.500 9 17 11 16.500 13' },
  { name: 'State', box: true, stroke: '#b9bbdb', pw: 1.2, path: 'M1 3 H21' },
  { name: 'GraphFunction', box: true, glyph: 'fx' },
  { name: 'Junction', ring: '#4a519f', fill: 'none', sw: 1.5 },
  { name: 'HistoryJunction', ring: '#c2282d', fill: '#fff', sw: 1, stroke: '#b5161c', pw: 1.6, path: 'M6.500 5 V17 M15.500 5 V17 M6.500 11 H15.500' },
  { name: 'DefaultTransition', dot: true, stroke: '#5c74bd', pw: 1.2, path: 'M11 5 V18 M9.300 15.500 L11 18 L12.700 15.500' },
];

// captions and values drawn inside the diagram
const labels = [
  { text: '4', x: 706.5, y: 695, size: 28 },
  { text: 'constant1', x: 706, y: 755.5, size: 21 },
  { text: '1', x: 664.5, y: 944, size: 28 },
  { text: 'inport', x: 665, y: 1004, size: 21 },
  { text: 'scope', x: 1762.5, y: 662, size: 21 },
  { text: '+', x: 1826.5, y: 744, size: 38, weight: 'bold' },
  { text: 'sum2', x: 1826, y: 803, size: 21 },
  { text: '1', x: 2153.5, y: 743.5, size: 28 },
  { text: 'outport', x: 2154, y: 804, size: 21 },
];

const stats = [
  ['CPU time for Integration:', '0s'],
  ['Number of Time Events:', '0'],
  ['Number of State Events:', '0'],
  ['Number of Step Events:', '0'],
  ['Number of Grid Points:', '10'],
  ['Minimum integration stepsize:', '0.5'],
  ['Maximum integration stepsize:', '0.5'],
];
const log = [
  'Simulation finished at time = 5 (stopTime = 5)',
  ...stats.map(([k, v]) => ('  ' + k).padEnd(39) + v),
].join('\n');
</script>

<style>
body {
  margin: 0;
  overflow: hidden;
}
</style>

<style scoped>
.window {
  position: relative;
  width: 2559px;
  height: 1380px;
  display: flex;
  flex-direction: column;
  overflow: hidden;
  background: #f3f3f3;
  color: #000;
  font: 15px/20px "Noto Sans", "Noto Sans CJK SC", sans-serif;
  white-space: nowrap;
}

.window * {
  box-sizing: border-box;
}

svg {
  flex: none;
  display: block;
}

.sprites {
  position: absolute;
}

.ic16 { width: 16px; height: 16px; }
.ic18 { width: 18px; height: 18px; }
.ic19 { width: 19px; height: 19px; }
.ic20 { width: 20px; height: 20px; }
.ic22 { width: 22px; height: 22px; }
.ic24 { width: 24px; height: 22px; }
.ic27 { width: 27px; height: 27px; }

.tri {
  width: 0;
  height: 0;
  border: 4px solid transparent;
  border-top: 4px solid #000;
  border-bottom: 0;
}

/* Title bar */
.titlebar {
  height: 37px;
  display: grid;
  grid-template-columns: 1fr auto 1fr;
  align-items: center;
  background: #ddd;
}

.quick {
  display: flex;
  align-items: center;
  gap: 9px;
  padding-left: 7px;
}

.quick .ic20 {
  margin-right: 9px;
}

.quick-more {
  display: flex;
  flex-direction: column;
  gap: 3px;
}

.quick-more i {
  width: 8px;
  height: 1px;
  background: #000;
}

.title {
  padding: 1px 0 0;
  margin-right: 43px;
  letter-spacing: .35px;
}

.win-btns {
  display: flex;
  justify-content: flex-end;
  align-items: center;
  padding-right: 24px;
}

.login {
  margin: -2px 32px 0 0;
}

.wb {
  width: 14px;
  height: 14px;
  margin-left: 49px;
}

.login + .wb {
  margin-left: 0;
}

.wb path,
.dlg-x path {
  fill: none;
  stroke: #000;
  stroke-width: 1.2;
}

/* Menu bar */
.menubar {
  height: 28px;
  display: flex;
  align-items: center;
  background: #ddd;
}

.menu {
  height: 28px;
  padding: 0 15px;
  line-height: 28px;
}

.menu.first {
  padding: 0 24px 0 23px;
}

.menu.active {
  background: #f3f3f3;
  color: #3c82bf;
}

.top-search {
  width: 286px;
  height: 22px;
  margin: 0 4px 0 auto;
  padding: 0 8px 0 2px;
  display: flex;
  align-items: center;
  justify-content: space-between;
  border-radius: 3px;
  background: #fff;
  color: #777;
}

.mr8 { margin-right: 8px; }
.mr3 { margin-right: 3px; }

/* Ribbon */
.ribbon {
  height: 125px;
  display: flex;
  border-bottom: 1px solid #d9d9d9;
}

.group {
  height: 119px;
  display: flex;
  flex-direction: column;
  border-right: 1px solid #cbcbcb;
}

.g-file { width: 170px; }
.g-lib { width: 84px; }
.g-view { width: 146px; }
.g-sim { width: 673px; }
.g-result { width: 98px; }
.g-env { width: 125px; }
.g-help { width: 73px; }

.tools {
  height: 98px;
  padding-top: 4px;
  display: flex;
  justify-content: center;
}

.group-name {
  text-align: center;
  line-height: 30px;
  height: 21px;
}

.big {
  width: 46px;
  height: 93px;
  display: flex;
  flex-direction: column;
  align-items: center;
  padding-top: 12px;
}

.big span {
  margin-top: 11px;
}

.big .tri {
  margin-top: 10px;
}

.w60 { width: 60px; }
.w76 { width: 76px; }

.big.on {
  border: 1px solid #90c0e8;
  padding-top: 11px;
  background: #b0dbff;
}

.big.off {
  color: #838383;
}

.g-file .tools {
  justify-content: flex-start;
  padding-left: 12px;
}

.g-lib .tools,
.g-result .tools {
  padding-left: 3px;
}

.g-view .tools {
  justify-content: flex-start;
  padding-left: 5px;
}

.g-help .tools {
  padding-left: 2px;
}

.small-col {
  display: flex;
  flex-direction: column;
  margin-left: 14px;
}

.small {
  height: 31px;
  display: flex;
  align-items: center;
}

.small span {
  margin: 0 0 0 7px;
}

.small .tri {
  margin-left: 12px;
}

.small .ic18 {
  margin-top: -1px;
}

.g-sim .tools {
  justify-content: flex-start;
  padding-left: 5px;
}

.vsep {
  width: 1px;
  height: 87px;
  margin: 3px 3px 0;
  background: #cbcbcb;
}

.sim-form {
  width: 262px;
  margin: 1px 0 0 12px;
  display: grid;
  grid-template-columns: 58px 204px;
  grid-template-rows: 25px 25px 25px;
  row-gap: 1px;
  align-items: center;
}

.field {
  height: 25px;
  padding-left: 3px;
  line-height: 24px;
  border-bottom: 1px solid #868686;
  background: #fff;
}

.field.disabled {
  height: 24px;
  line-height: 21px;
  border: 1px solid #e8e8e8;
  background: #f0f0f0;
  color: #999;
}

.combo {
  display: flex;
  align-items: center;
  padding: 0 6px 0 5px;
  justify-content: space-between;
  letter-spacing: .25px;
}

.combo span {
  width: 178px;
  overflow: hidden;
}

.combo svg {
  width: 10px;
  height: 6px;
}

.combo path {
  fill: none;
  stroke: #555;
}

label {
  display: flex;
  align-items: center;
}

.box {
  flex: none;
  width: 16px;
  height: 16px;
  margin-right: 6px;
  border: 1px solid #666;
  border-radius: 3px;
  background: #f5f5f5;
}

.box.checked {
  border: 0;
  background: #005fb8;
}

.box.checked path {
  fill: none;
  stroke: #fff;
  stroke-width: 1.2;
}

.radio {
  flex: none;
  width: 16px;
  height: 16px;
  margin-right: 7px;
  border: 1px solid #777;
  border-radius: 50%;
  background: #fafafa;
}

.radio.on {
  border: 5px solid #005fb8;
  background: #fff;
}

.radio.dim {
  border-color: #c5c5c5;
}

.bits {
  display: flex;
  flex-direction: column;
  gap: 14px;
  margin: 12px 0 0 13px;
  height: 54px;
}

.g-env .tools {
  justify-content: flex-start;
}

.g-env .small-col {
  margin-left: 11px;
}

/* Work area */
.work {
  height: 1132px;
  display: flex;
}

.strip {
  display: flex;
  flex-direction: column;
  background: #e9e9e9;
}

.strip.left {
  width: 29px;
  justify-content: space-between;
  border-right: 1px solid #cdcdcd;
}

.strip.right {
  width: 28px;
  border-left: 1px solid #cdcdcd;
}

.vtab {
  height: 114px;
  display: flex;
  flex-direction: column;
  align-items: center;
  padding-top: 15px;
  gap: 5px;
  background: #fff;
  border-bottom: 1px solid #cdcdcd;
}

.vtab span {
  writing-mode: vertical-rl;
  text-orientation: sideways;
}

.left .vtab {
  align-items: flex-start;
  padding-left: 3px;
}

.left .vtab span {
  transform: rotate(180deg);
  margin-left: 1px;
}

.vtab.down {
  border-top: 1px solid #cdcdcd;
}

.right .vtab {
  height: 129px;
}

.right .vtab span {
  margin-top: 1px;
}

/* Side panels */
.side {
  width: 326px;
  border-right: 1px solid #cdcdcd;
  display: flex;
  flex-direction: column;
}

.panel {
  display: flex;
  flex-direction: column;
}

.lib-panel {
  height: 652px;
  border-bottom: 1px solid #cdcdcd;
}

.panel-head {
  height: 28px;
  display: flex;
  align-items: center;
  padding: 0 8px 1px 5px;
}

.panel-head span {
  flex: 1;
}

.big-tri {
  border-width: 6px 5.500px 0;
  border-top-color: #6b6b6b;
}

.dash {
  width: 12px;
  height: 2px;
  margin-left: 16px;
  background: #777;
}

.panel-tools {
  height: 28px;
  display: flex;
  align-items: center;
  padding: 0 7px 2px 6px;
}

.tri.black {
  border-width: 5px 4.500px 0;
  margin: 0 7px 0 8px;
}

.search-box {
  width: 217px;
  height: 25px;
  display: flex;
  align-items: center;
  gap: 6px;
  padding-left: 8px;
  border-radius: 2px;
  border-bottom: 1px solid #868686;
  background: #fff;
  color: #777;
}

.search-box.wide {
  width: 261px;
  padding: 0 0 2px 2px;
}

.green {
  color: #3a9a5c;
}

.flt {
  margin: 0 10px 0 8px;
}

.tree-wrap {
  flex: 1;
  display: flex;
}

.tree {
  flex: 1;
}

.row {
  height: 29px;
  display: flex;
  align-items: center;
  padding-left: 16px;
  letter-spacing: .18px;
}

.row span {
  margin-top: -2px;
}

.chev {
  width: 10px;
  height: 10px;
}

.chev path {
  fill: none;
  stroke: #777;
  stroke-width: 1.5;
}

.chev.open {
  transform: rotate(90deg);
}

.chev.open path {
  stroke: #222;
  stroke-width: 1.8;
}

.node-icon {
  margin: 0 9px 0 10px;
}

.node-icon + span {
  margin-left: -.5px;
}

.row.child {
  margin: 0 1px 0 42px;
  padding-left: 5px;
  border-radius: 2px;
}

.child .ic22 {
  margin-right: 7px;
}

.row.selected {
  background: #cecece;
}

.track {
  width: 17px;
  border-left: 1px solid #fff;
  background: #f0f0f0;
}

.thumb {
  display: block;
  width: 2px;
  height: 508px;
  margin: 69px 0 0 7px;
  background: #868686;
}

.user-tools {
  padding: 1px 7px 0 3px;
}

.row.model {
  margin-left: 14px;
  padding-left: 5px;
  border-radius: 2px;
  letter-spacing: .5px;
}

.model .ic22 {
  margin-right: 7px;
}

.row.model.selected {
  color: #d40000;
}

.blue { color: #a8d2f3; }
.white { color: #fff; }

.row.fmu {
  padding-left: 2px;
  letter-spacing: .5px;
}

.fmu .ic24 {
  margin: 0 6px 0 6px;
}

.fmu-child .ic22 {
  margin: 0 8px 0 6px;
}

/* Centre */
.center {
  flex: 1;
  display: flex;
  flex-direction: column;
  background: #f0f0f0;
}

.tabs {
  height: 29px;
  padding: 1px 0 0 1px;
}

.doc-tab {
  width: 144px;
  height: 28px;
  display: flex;
  align-items: center;
  padding: 0 0 0 16px;
  background: #3c82bf;
  color: #fff;
}

.doc-tab span {
  margin: 0 9px 0 6px;
  letter-spacing: .5px;
}

.x {
  width: 10px;
  height: 10px;
}

.x path {
  stroke: #12324e;
}

.crumbs {
  height: 27px;
  display: flex;
  align-items: center;
  gap: 11px;
  padding-left: 7px;
  border-bottom: 1px solid #cdcdcd;
  background: #fff;
}

.crumbs .ic16 {
  color: #fff;
}

.crumb-tri {
  width: 6px;
  height: 11px;
}

.canvas {
  width: 100%;
  height: 836px;
  background: #fff3e0;
}

.canvas text {
  font-family: "Liberation Sans", Arial, sans-serif;
  text-anchor: middle;
}

.output {
  flex: 1;
  display: flex;
  flex-direction: column;
  border-top: 1px solid #cdcdcd;
  background: #f3f3f3;
}

.out-tabs {
  height: 32px;
  display: flex;
  border-bottom: 1px solid #d6d6d6;
}

.out-tabs span {
  width: 60px;
  text-align: center;
  line-height: 33px;
}

.out-tabs .active {
  color: #3c82bf;
  border-bottom: 2px solid #3c82bf;
}

.log-wrap {
  height: 179px;
  display: flex;
  overflow: hidden;
}

.log {
  flex: 1;
  padding-left: 4px;
}

.log pre {
  margin: 0;
  font: 13.200px/17.100px "Liberation Mono", "Noto Sans CJK SC", monospace;
}

.log .scrolled {
  margin: -9px 0 14px;
}

.log-thumb {
  height: 96px;
  margin-top: 65px;
}

/* Documentation browser */
.docs {
  width: 189px;
  border-left: 1px solid #cdcdcd;
  display: flex;
  flex-direction: column;
}

.doc-tools {
  height: 29px;
  display: flex;
  align-items: center;
  padding: 0 0 3px 6px;
  border-bottom: 1px solid #cdcdcd;
}

.link { color: #1480c4; }

.fwd {
  margin: 0 9px;
  color: #777;
  transform: scaleX(-1);
}

.dsep {
  width: 1px;
  height: 20px;
  margin: 0 7px 0 12px;
  background: #cdcdcd;
}

.hl {
  width: 27px;
  height: 25px;
  margin-right: 4px;
  padding: 3px 4px;
  border: 1px solid #90caf9;
  border-radius: 2px;
  background: #cce8ff;
}

.doc-body {
  flex: 1;
  display: flex;
}

.doc-text {
  flex: 1;
  padding: 16px 0 0 11px;
  color: #333;
  font-size: 17px;
  line-height: 25px;
}

.doc-text p,
.doc-text h2,
.doc-text h3 {
  margin: 0;
}

.doc-text h2 {
  margin-top: 23px;
  font-size: 20px;
}

.doc-text h3 {
  margin-top: 72px;
  font-size: 19px;
}

.doc-text hr {
  width: 106px;
  margin: 52px 0 0 20px;
  border: 0;
  border-top: 1px solid #cdcdcd;
}

.d2 { padding-top: 90px; }
.d3 { padding-top: 16px; }
.d4 { padding-top: 15px; }

.doc-track {
  width: 20px;
  display: flex;
  flex-direction: column;
  justify-content: space-between;
  align-items: center;
  padding: 9px 0;
  background: #f0f0f0;
}

.up-tri {
  border-width: 0 4.500px 5px;
  border-bottom: 5px solid #999;
}

.down-tri {
  border-width: 5px 4.500px 0;
  border-top-color: #999;
}

/* Bottom */
.bottom-tabs {
  height: 29px;
  display: flex;
  padding-left: 28px;
  border-top: 1px solid #cdcdcd;
  background: #e9e9e9;
}

.btab {
  display: flex;
  align-items: center;
  gap: 5px;
  padding: 0 14px 0 16px;
}

.btab.active {
  background: #fff;
  border: solid #cdcdcd;
  border-width: 0 1px;
  padding-left: 15px;
}

.status {
  height: 29px;
  display: flex;
  align-items: center;
  padding-left: 6px;
  background: #3c82bf;
  color: #fff;
}

.status i {
  width: 15px;
  height: 15px;
  margin-right: 10px;
  border: 1px solid #dcebf8;
}

.rw {
  margin-left: auto;
  margin-right: 162px;
}

/* Dialog */
.dialog {
  position: absolute;
  left: 873px;
  top: 312px;
  width: 640px;
  height: 611px;
  display: flex;
  flex-direction: column;
  border: 1px solid #a9a69d;
  border-radius: 9px;
  background: #f0f0f0;
  box-shadow: 0 24px 48px rgba(60, 45, 10, .26), 0 2px 26px rgba(60, 45, 10, .18);
}

.dlg-title {
  height: 37px;
  display: flex;
  align-items: center;
  padding: 0 15px 0 9px;
  border-radius: 8px 8px 0 0;
  background: #f3f3f3;
  color: #999;
}

.dlg-title span {
  flex: 1;
  margin: -3px 0 0 7px;
}

.dlg-x {
  width: 12px;
  height: 12px;
}

.dlg-x path {
  stroke: #888;
}

.dlg-tabs {
  height: 41px;
  display: flex;
  padding-left: 13px;
}

.dlg-tabs span {
  width: 60px;
  text-align: center;
  line-height: 52px;
}

.dlg-tabs .active {
  color: #3c82bf;
  border-bottom: 2px solid #3c82bf;
}

.dlg-page {
  height: 481px;
  margin: 0 13px;
  padding: 11px 11px 0;
  background: #f3f3f3;
}

fieldset {
  min-width: 0;
  margin: 0;
  padding: 0 12px 0 11px;
  border: 1px solid #dadada;
}

legend {
  height: 20px;
  margin-left: -4px;
  padding: 0 3px 0 2px;
}

.fs1 { height: 97px; }
.fs2 { height: 70px; margin-top: 7px; }
.fs3 { height: 164px; margin-top: 6px; }
.fs4 { height: 64px; margin-top: 6px; padding-left: 9px; }

.fs4 legend {
  margin-left: -2px;
}

.fs1 label {
  height: 30px;
}

.fs1 legend + label {
  margin-top: 9px;
}

.line {
  height: 32px;
  display: flex;
  align-items: center;
  justify-content: space-between;
}

.line > label {
  flex: 1;
}

.line.gray {
  color: #838383;
}

.fs2 .line {
  margin-top: 9px;
}

.fs3 > label {
  height: 32px;
  margin-top: 8px;
  margin-bottom: -1px;
}

.fs4 > label {
  height: 20px;
  margin-top: 12px;
}

.spin {
  width: 173px;
  height: 26px;
  display: flex;
  justify-content: space-between;
  align-items: center;
  padding: 0 1px 0 3px;
  border: 1px solid #e9e9e9;
  background: #f0f0f0;
}

.spin.live {
  width: 278px;
  border-bottom-color: #868686;
  background: #fff;
}

.spin em {
  width: 17px;
  height: 23px;
  display: flex;
  flex-direction: column;
  align-items: center;
  justify-content: space-around;
  border: 1px solid #ddd;
  border-radius: 2px;
  background: #f7f7f7;
}

.spin .tri {
  border-width: 5px 3.500px 0;
}

.spin .tri:first-child {
  border-width: 0 3.500px 5px;
  border-bottom: 5px solid #000;
}

.gray .tri {
  opacity: .4;
}

.unit {
  width: 35px;
  padding-left: 5px;
}

.path {
  width: 386px;
  height: 26px;
  padding-left: 2px;
  line-height: 23px;
  letter-spacing: .33px;
  border: 1px solid #fafafa;
  background: #f0f0f0;
}

.dlg-btns {
  display: flex;
  gap: 9px;
  padding: 9px 13px 0 14px;
}

button {
  width: 92px;
  height: 27px;
  padding: 0;
  border: 1px solid #cfcfcf;
  border-radius: 4px;
  background: #fdfdfd;
  font: inherit;
}

.save-btn {
  width: 127px;
  margin-left: auto;
}

.marks {
  position: absolute;
  left: 0;
  top: 0;
  width: 2559px;
  height: 1380px;
  pointer-events: none;
}
</style>
